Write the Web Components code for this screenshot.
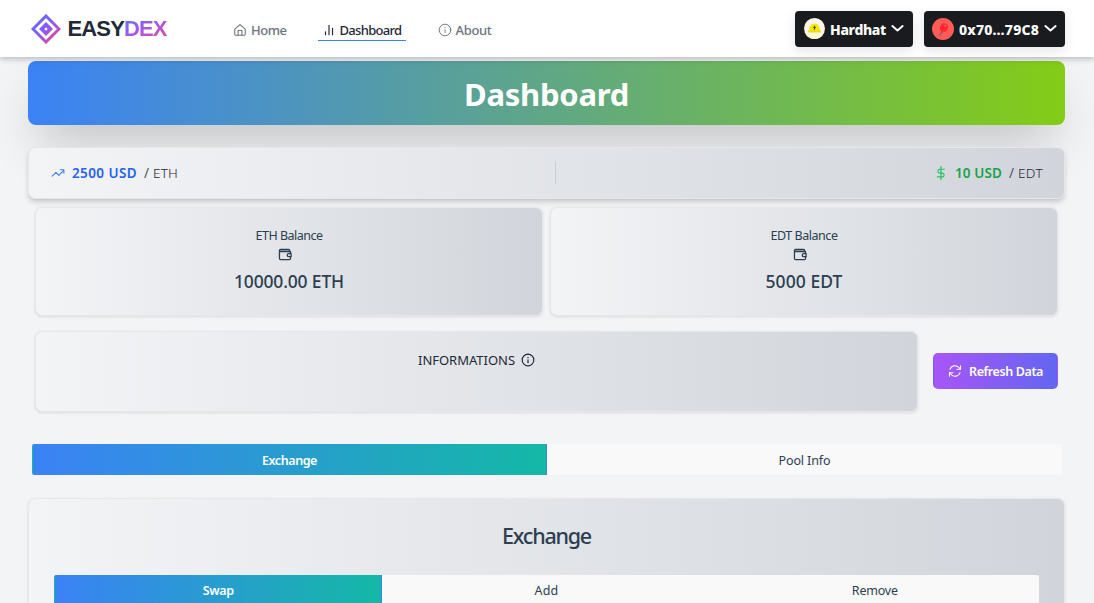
<!DOCTYPE html>
<html lang="en">
<head>
<meta charset="utf-8">
<title>EasyDex</title>
<style>
html,body{margin:0;height:603px;overflow:hidden;background:#f3f4f6;color:#2c3e50;font-family:"Noto Sans","Open Sans",sans-serif;font-size:13px}
</style>
</head>
<body>
<dex-app></dex-app>
<script>
const define=(name,html,setup)=>customElements.define(name,class extends HTMLElement{
  constructor(){super();this.attachShadow({mode:'open'}).innerHTML=html;}
  connectedCallback(){if(setup)setup(this,this.shadowRoot);}
});

/* Text set to a given measure by adjusting its tracking */
define('fit-text','<style>:host{display:block;white-space:nowrap;flex:none}span{display:inline-block}</style><span><slot></slot></span>',(el,root)=>{
  const w=+el.getAttribute('w'),s=root.querySelector('span');
  const n=el.textContent.length;
  const k=(w-s.getBoundingClientRect().width)/n;
  s.style.letterSpacing=k.toFixed(3)+'px';
  el.style.width=w+'px';
});

const icons={
home:'<path d="M3 10.5 12 2.8l9 7.7V19a2 2 0 0 1-2 2H5a2 2 0 0 1-2-2z"/><path d="M8.7 21v-8.2h6.6V21"/>',
bars:'<path d="M6 20v-5M12 20V4M18 20V9"/>',
info:'<circle cx="12" cy="12" r="10"/><path d="M12 16.5v-5M12 7.3v.8"/>',
trend:'<path d="m2 17.5 6.5-6.5 5 5L22 7"/><path d="M16 6.5h6v6"/>',
dollar:'<path d="M12 1v22M17.5 5.5H9.3a3.4 3.4 0 0 0 0 6.6h5.4a3.4 3.4 0 0 1 0 6.6H6"/>',
wallet:'<path d="M20 8V6a2 2 0 0 0-2-2H4.500a2 2 0 0 0-2 2v13.5a2 2 0 0 0 2 2h15a2 2 0 0 0 2-2V17"/><path d="M3 8h18.500v3"/><path d="M3.500 5.800H19" stroke-opacity=".5"/><path d="M22.500 11.500h-4.200a2.500 2.500 0 0 0 0 5h4.200z"/>',
refresh:'<path d="M21.500 3v6h-6M2.500 21v-6h6"/><path d="M3.300 9.200A9 9 0 0 1 18.400 5.800L21.500 9M2.500 15l3.100 3.200A9 9 0 0 0 20.700 14.800"/>',
chevron:'<path d="m2.500 7.500 9.500 8.200 9.500-8.200" stroke-width="3.600"/>'
};
define('ui-icon','<style>:host{display:block;flex:none}svg{display:block;overflow:visible}</style><svg viewBox="0 0 24 24" fill="none" stroke="currentColor" stroke-linecap="round" stroke-linejoin="round"></svg>',(el,root)=>{
  const s=root.querySelector('svg'),z=el.getAttribute('size')||14;
  s.setAttribute('width',z);s.setAttribute('height',z);s.setAttribute('stroke-width',el.getAttribute('stroke')||1.8);
  s.innerHTML=icons[el.getAttribute('name')];
});

define('dex-logo',`<style>
:host{display:flex;align-items:center;gap:6.500px;font:700 22px/26px "Liberation Sans",Arial,sans-serif;color:#1f2937}
svg{display:block;flex:none}.t{display:flex}
.g{color:transparent;background:linear-gradient(155deg,#6f6cf6 15%,#a855e8 50%,#e0489f 90%);background-clip:text;-webkit-background-clip:text}
</style><svg width="30" height="30" viewBox="0 0 30 30" fill="none" stroke="url(#g)"><defs><linearGradient id="g" gradientUnits="userSpaceOnUse" x1="5" y1="4" x2="24" y2="25"><stop stop-color="#5b6cf9"/><stop offset=".5" stop-color="#8b5cf6"/><stop offset="1" stop-color="#d946a8"/></linearGradient></defs><path d="M15 2 28 15 15 28 2 15z" stroke-width="3"/><path d="M15 10.700 19.300 15 15 19.300 10.700 15z" stroke-width="3.800"/></svg><div class="t"><fit-text w="56.500">EASY</fit-text><fit-text class="g" w="42.500">DEX</fit-text></div>`);

define('nav-link',`<style>
:host{display:flex;box-sizing:border-box;align-items:center;gap:4px;height:20px;color:#6b7280;font-weight:500;font-size:13px;line-height:18px;border-bottom:1px solid transparent;padding:0 4px 0 2px}
:host([active]){color:#1f2937;border-color:#3b82f6;padding:0 4px}
</style><slot></slot>`);

define('wallet-button',`<style>
:host{display:flex;box-sizing:border-box;height:36px;align-items:center;background:#1a1b1f;color:#fff;border-radius:4px;box-shadow:0 4px 12px rgba(0,0,0,.1);padding:0 8px 0 9px;font-weight:800;font-size:14px;line-height:20px}
::slotted(fit-text){margin:2px 5px 0 5px}
::slotted(svg){display:block;flex:none}
::slotted(ui-icon){margin-top:-2px}
</style><slot></slot>`);

define('dex-header',`<style>
:host{display:flex;box-sizing:border-box;height:57px;background:#fff;align-items:center;padding:0 29px 0 31px;position:relative;z-index:2;box-shadow:0 2px 6px rgba(0,0,0,.24)}
nav{display:flex;align-items:center;margin-left:64px;padding-top:4px}
.w{display:flex;gap:11px;margin-left:auto;padding-top:1px}
dex-logo{width:136px}
</style><dex-logo></dex-logo>
<nav><nav-link><ui-icon name="home" size="14"></ui-icon><fit-text w="35.500">Home</fit-text></nav-link>
<nav-link active style="margin-left:27px"><ui-icon name="bars" size="14" stroke="2"></ui-icon><fit-text w="62">Dashboard</fit-text></nav-link>
<nav-link style="margin-left:30px"><ui-icon name="info" size="14" stroke="1.600"></ui-icon><fit-text w="36">About</fit-text></nav-link></nav>
<div class="w"><wallet-button><svg width="21" height="21" viewBox="0 0 21 21" style="margin-top:-2px"><circle cx="10.500" cy="10.500" r="10.500" fill="#f9f5ed"/><path d="M2.200 17a10.500 10.500 0 0 0 16.600 0z" fill="#fffbd1"/><path d="M5.300 13.300v-2.600a5.200 5.200 0 0 1 10.400 0v2.600z" fill="#f7e900"/><rect x="4" y="12.300" width="13" height="2.300" rx="1" fill="#f1df00"/><path d="M10.500 7.800v4M9.200 9.500h2.600" stroke="#57511c" stroke-width="1.200"/></svg><fit-text w="56">Hardhat</fit-text><ui-icon name="chevron" size="13" style="width:14px"></ui-icon></wallet-button>
<wallet-button style="padding-left:8px"><svg width="22" height="22" viewBox="0 0 22 22" style="margin-top:-1px"><circle cx="11" cy="11" r="11" fill="#ff5c55"/><path d="M10 13.500c.8 1.700-.3 2.500-1.600 2.300-1.100 0-.9 1.100-.2 1.800" fill="none" stroke="#8b449e"/><ellipse cx="12" cy="9.600" rx="3.900" ry="4.200" transform="rotate(28 12 9.600)" fill="#ff2531"/><circle cx="13.300" cy="7.800" r="1" fill="#ff655f"/><path d="m9.700 12.700-1.200 1.700 2.500.1z" fill="#df213b"/></svg><fit-text w="80">0x70…79C8</fit-text><ui-icon name="chevron" size="13"></ui-icon></wallet-button></div>`);

define('page-banner',`<style>
:host{display:flex;justify-content:center;box-sizing:border-box;height:64px;border-radius:8px;background:linear-gradient(90deg,#3b82f6,#84cc16);box-shadow:0 25px 50px -12px rgba(0,0,0,.25);color:#fff;font-weight:700;font-size:31px;line-height:67px}
</style><slot></slot>`);

define('grey-card',`<style>
:host{display:block;box-sizing:border-box;border:1px solid #e5e7eb;border-radius:7px;background:linear-gradient(90deg,#f3f4f6,#d1d5db) padding-box,#e5e7eb border-box;box-shadow:0 1px 3px rgba(0,0,0,.1)}
</style><slot></slot>`);

define('price-bar',`<style>
grey-card{height:52px;box-shadow:0 4px 6px -1px rgba(0,0,0,.16),0 2px 4px -2px rgba(0,0,0,.12)}
.r{display:flex;align-items:center;height:50px;padding:0 21px 0 22px;font-size:13.500px;line-height:20px}
.h{display:flex;align-items:center;flex:1}.h:last-child{justify-content:flex-end}
i{display:block;width:1px;height:22px;background:#c8ccd3;margin-left:17px}
.b{color:#2563eb;font-weight:600;margin:0 7px 0 7px}.gr{color:#16a34a;font-weight:600;margin:0 7px 0 7px}
.u{color:#1f2937;font-weight:300}.s{color:#4b5563;margin-right:3px;font-weight:400}
</style><grey-card><div class="r"><div class="h"><ui-icon name="trend" size="14" style="color:#3b82f6"></ui-icon><fit-text class="b" w="65">2500 USD</fit-text><fit-text class="s" w="6">/</fit-text><fit-text class="u" w="25">ETH</fit-text></div><i></i>
<div class="h"><ui-icon name="dollar" size="14" stroke="2" style="color:#22c55e"></ui-icon><fit-text class="gr" w="47">10 USD</fit-text><fit-text class="s" w="6">/</fit-text><fit-text class="u" w="25">EDT</fit-text></div></div></grey-card>`);

define('balance-card',`<style>
grey-card{height:109px}
.c{display:flex;flex-direction:column;align-items:center;padding-top:19px}
::slotted([slot=label]){font-size:12.500px;line-height:18px}
ui-icon{margin:2px 0 7px;transform:translateX(-4px)}
::slotted([slot=value]){font-size:17.500px;line-height:26px;font-weight:500}
</style><grey-card><div class="c"><slot name="label"></slot><ui-icon name="wallet" size="14" stroke="2.200"></ui-icon><slot name="value"></slot></div></grey-card>`);

define('action-button',`<style>
:host{display:flex;box-sizing:border-box;width:125px;height:36px;align-items:center;gap:7px;margin-top:-2px;padding:0 14px;border:1px solid transparent;border-radius:5px;background:linear-gradient(90deg,#a855f7,#6366f1);color:#fff;font-weight:600;font-size:12.500px;line-height:18px}
::slotted(fit-text){padding-top:2px}
</style><slot></slot>`);

define('tab-strip',`<style>
:host{display:grid;grid-auto-flow:column;grid-auto-columns:1fr;height:31px;border-radius:2px;overflow:hidden;background:#f9f9f9}
</style><slot></slot>`);
define('tab-item',`<style>
:host{display:flex;box-sizing:border-box;justify-content:center;align-items:center;height:31px;border:0 solid transparent;border-width:0 1px;font-size:12.500px;line-height:19px;padding-top:2px}
:host([active]){background:linear-gradient(90deg,#3b82f6,#14b8a6);color:#fff;font-weight:600}
</style><slot></slot>`);

define('exchange-panel',`<style>
grey-card{height:200px}
.c{display:flex;flex-direction:column;align-items:center;padding:21px 25px 0}
.t{font-size:21.500px;line-height:32px;font-weight:500}
tab-strip{align-self:stretch;margin-top:23px}
tab-item{padding-top:0}
</style><grey-card><div class="c"><fit-text class="t" w="89">Exchange</fit-text><tab-strip><tab-item active><fit-text w="31">Swap</fit-text></tab-item><tab-item><fit-text w="24">Add</fit-text></tab-item><tab-item><fit-text w="46">Remove</fit-text></tab-item></tab-strip></div></grey-card>`);

define('dex-app',`<style>
:host{display:block;height:603px;overflow:hidden}
main{padding:4px 29px 0 28px}
price-bar{display:block;margin-top:22px}
.b{display:grid;grid-template-columns:508px 508px;gap:7px;margin:8px 7px 0}
.i{display:flex;align-items:center;gap:15px;margin:15px 7px 0}
.i grey-card{width:883px;height:81px;flex:none}
.t{display:flex;justify-content:center;align-items:center;gap:6px;padding-top:18px;line-height:20px;color:#1f2937;font-size:13px}
.m{margin:32px 3px 0 4px}
exchange-panel{display:block;margin-top:23px}
</style><dex-header></dex-header><main>
<page-banner><fit-text w="165">Dashboard</fit-text></page-banner>
<price-bar></price-bar>
<div class="b"><balance-card><fit-text slot="label" w="67">ETH Balance</fit-text><fit-text slot="value" w="110">10000.00 ETH</fit-text></balance-card>
<balance-card><fit-text slot="label" w="67">EDT Balance</fit-text><fit-text slot="value" w="77">5000 EDT</fit-text></balance-card></div>
<div class="i"><grey-card><div class="t"><fit-text w="97">INFORMATIONS</fit-text><ui-icon name="info" size="14" stroke="2"></ui-icon></div></grey-card>
<action-button><ui-icon name="refresh" size="14"></ui-icon><fit-text w="74">Refresh Data</fit-text></action-button></div>
<tab-strip class="m"><tab-item active><fit-text w="55">Exchange</fit-text></tab-item><tab-item><fit-text w="52">Pool Info</fit-text></tab-item></tab-strip>
<exchange-panel></exchange-panel></main>`);
</script>
</body>
</html>
